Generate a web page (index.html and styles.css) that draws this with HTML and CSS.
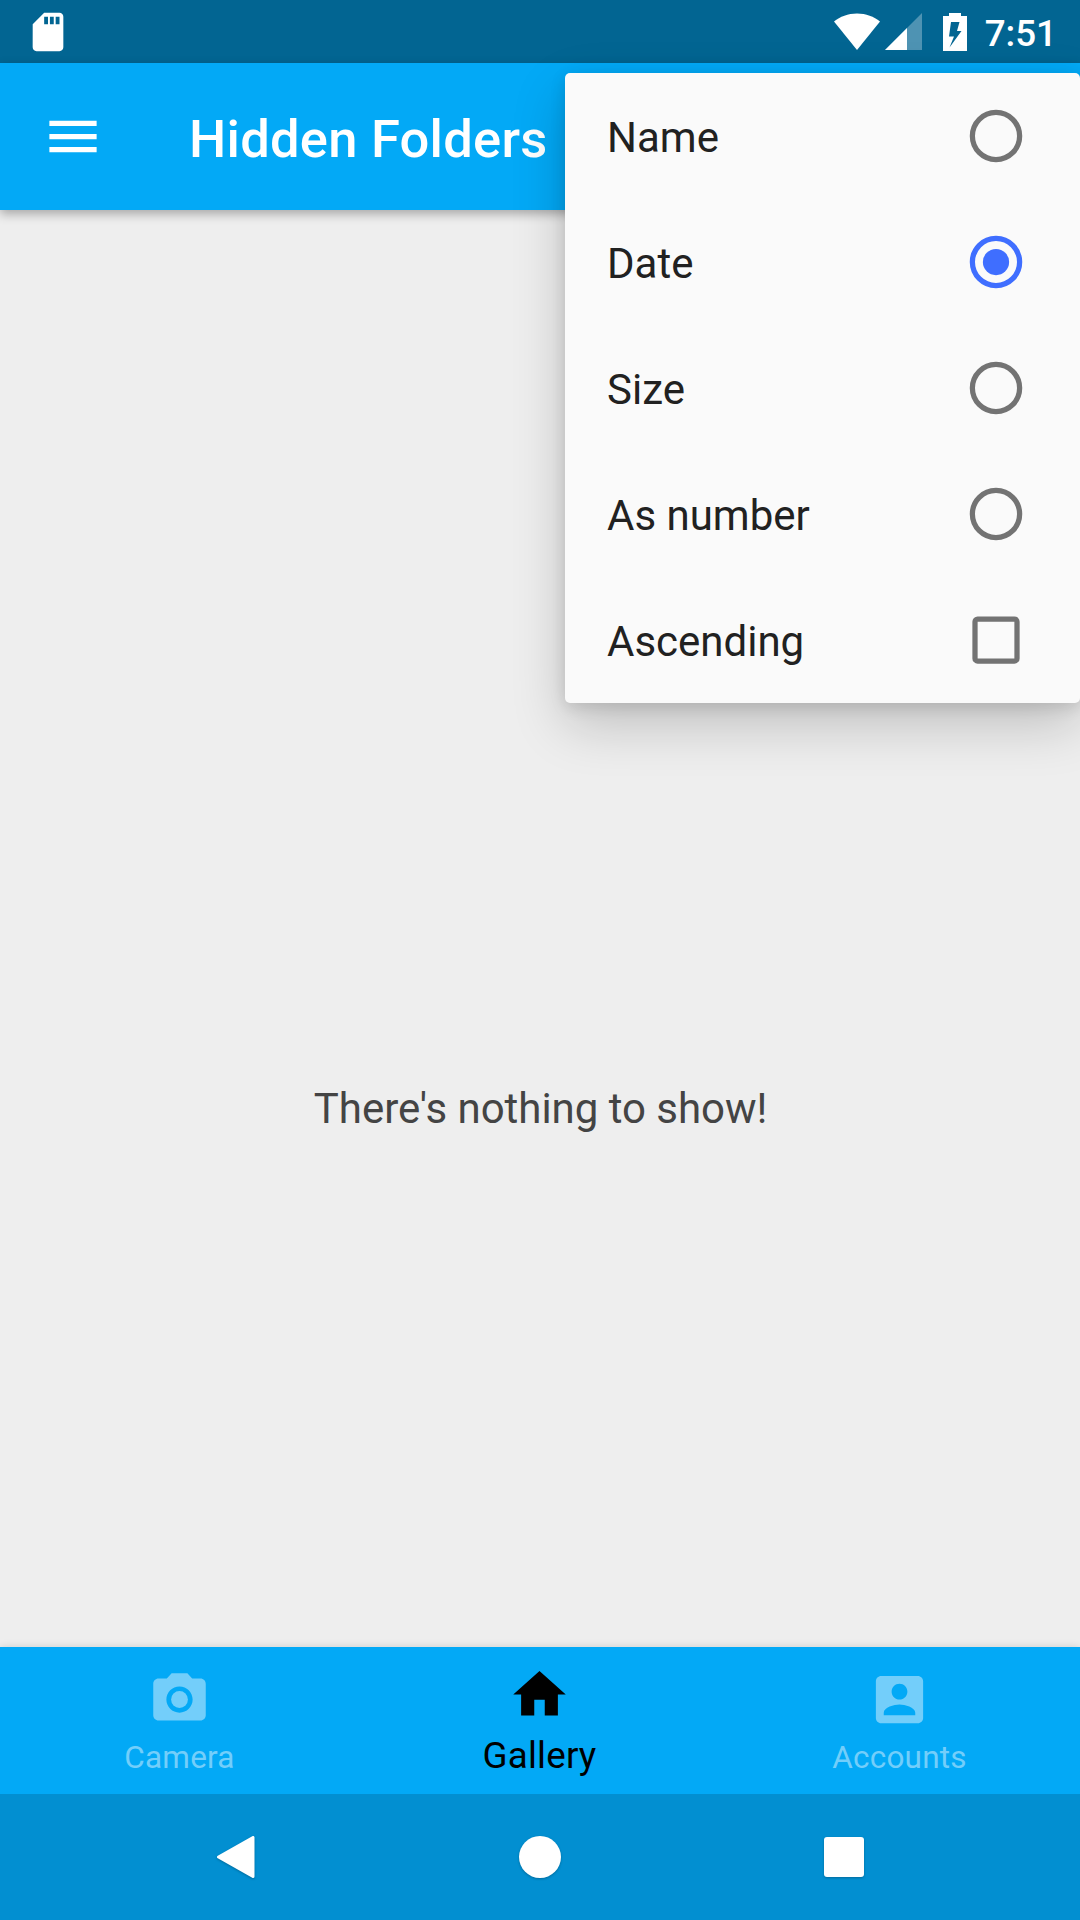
FILE: index.html
```html
<!DOCTYPE html>
<html lang="en">
<head>
<meta charset="utf-8">
<title>Hidden Folders</title>
<link rel="stylesheet" href="styles.css">
</head>
<body>
<div class="screen">
  <div class="status-bar">
    <svg class="sd-icon" viewBox="0 0 24 24"><path d="M18 2h-8L4.02 8 4 20c0 1.1.9 2 2 2h12c1.1 0 2-.9 2-2V4c0-1.1-.9-2-2-2zm-6 6h-2V4h2v4zm3 0h-2V4h2v4zm3 0h-2V4h2v4z"/></svg>
    <div class="status-right">
      <svg class="wifi-icon" viewBox="0 0 46 37"><path d="M23 37 0 8.5C6 3.500 14 .5 23 .5s17 3 23 8z"/></svg>
      <svg class="signal-icon" viewBox="0 0 37 37"><path opacity=".3" d="M0 37 37 0v37z"/><path d="M0 37 22 15v22z"/></svg>
      <svg class="battery-icon" viewBox="0 0 24 38"><path fill-rule="evenodd" d="M6 0h12v3h6v35H0V3h6zM8 9 6 23.500h5L6.500 34.500 18.500 18H14L16.500 9z"/></svg>
      <span class="clock">7:51</span>
    </div>
  </div>
  <header class="app-bar">
    <svg class="menu-icon" viewBox="0 0 24 24"><path d="M3 18h18v-2H3v2zm0-5h18v-2H3v2zm0-7v2h18V6H3z"/></svg>
    <h1 class="title">Hidden Folders</h1>
  </header>
  <main class="content"><p class="empty">There's nothing to show!</p></main>
  <nav class="tabs">
    <div class="tab">
      <svg class="tab-icon" viewBox="0 0 24 24"><circle cx="12" cy="12" r="3.2"/><path d="M9 2 7.170 4H4c-1.100 0-2 .9-2 2v12c0 1.100.9 2 2 2h16c1.100 0 2-.9 2-2V6c0-1.100-.9-2-2-2h-3.170L15 2H9zm3 15c-2.760 0-5-2.240-5-5s2.240-5 5-5 5 2.240 5 5-2.240 5-5 5z"/></svg>
      <span>Camera</span>
    </div>
    <div class="tab active">
      <svg class="tab-icon" viewBox="0 0 24 24"><path d="M10 20v-6h4v6h5v-8h3L12 3 2 12h3v8z"/></svg>
      <span>Gallery</span>
    </div>
    <div class="tab">
      <svg class="tab-icon" viewBox="0 0 24 24"><path d="M3 5v14c0 1.100.89 2 2 2h14c1.100 0 2-.9 2-2V5c0-1.100-.9-2-2-2H5c-1.110 0-2 .9-2 2zm12 4c0 1.660-1.340 3-3 3s-3-1.340-3-3 1.340-3 3-3 3 1.340 3 3zm-9 8c0-2 4-3.100 6-3.100s6 1.100 6 3.100v1H6v-1z"/></svg>
      <span>Accounts</span>
    </div>
  </nav>
  <div class="nav-bar">
    <svg class="nav-icon" viewBox="0 0 44 44"><path d="M39 2.500v39L4.500 22z" stroke="#fff" stroke-width="3" stroke-linejoin="round"/></svg>
    <svg class="nav-icon" viewBox="0 0 44 44"><circle cx="22" cy="22" r="21"/></svg>
    <svg class="nav-icon" viewBox="0 0 44 44"><rect x="2" y="2" width="40" height="40" rx="3"/></svg>
  </div>
  <div class="popup">
    <div class="option"><span>Name</span><svg class="mark" viewBox="0 0 32 32"><circle cx="16" cy="16" r="9"/></svg></div>
    <div class="option"><span>Date</span><svg class="mark checked" viewBox="0 0 32 32"><circle cx="16" cy="16" r="9"/><circle class="dot" cx="16" cy="16" r="5"/></svg></div>
    <div class="option"><span>Size</span><svg class="mark" viewBox="0 0 32 32"><circle cx="16" cy="16" r="9"/></svg></div>
    <div class="option"><span>As number</span><svg class="mark" viewBox="0 0 32 32"><circle cx="16" cy="16" r="9"/></svg></div>
    <div class="option"><span>Ascending</span><svg class="mark" viewBox="0 0 32 32"><rect x="8" y="8" width="16" height="16" rx="1"/></svg></div>
  </div>
</div>
</body>
</html>
```
FILE: styles.css
```css
* { box-sizing: border-box; }
body { margin: 0; font-family: Roboto, sans-serif; }
svg { display: block; fill: #fff; flex: none; }
.screen {
  position: relative;
  display: flex;
  flex-direction: column;
  width: 1080px;
  height: 1920px;
  overflow: hidden;
  background: #eee;
}
.status-bar {
  display: flex;
  justify-content: space-between;
  align-items: center;
  height: 63px;
  padding: 0 23px 0 24.5px;
  background: #026592;
}
.sd-icon { width: 46px; height: 46px; }
.status-right { display: flex; align-items: center; }
.wifi-icon { width: 46px; height: 37px; }
.signal-icon { width: 37px; height: 37px; margin-left: 5px; }
.battery-icon { width: 24px; height: 38px; margin-left: 21px; }
.clock {
  margin-left: 18px;
  color: #fff;
  font-size: 36.75px;
  font-weight: 500;
  line-height: 43px;
  padding-top: 3px;
}
.app-bar {
  position: relative;
  display: flex;
  align-items: center;
  height: 147px;
  padding-left: 41px;
  background: #03a9f6;
  box-shadow: 0 4px 10px rgba(0, 0, 0, .3);
}
.menu-icon { width: 64px; height: 63px; margin-top: -1px; }
.title {
  margin: 4px 0 0 84px;
  color: #fff;
  font-size: 52.5px;
  font-weight: 500;
  line-height: 62px;
  letter-spacing: .25px;
}
.content {
  flex: 1;
  display: flex;
  align-items: center;
  justify-content: center;
}
.empty { margin: 361px 0 0 1px; font-size: 42px; line-height: 50px; letter-spacing: -.04px; color: #444; }
.tabs {
  position: relative;
  display: grid;
  grid-template-columns: repeat(3, 360px);
  height: 147px;
  background: #03a9f6;
  box-shadow: 0 0 8px rgba(0, 0, 0, .14);
}
.tab {
  display: flex;
  flex-direction: column;
  align-items: center;
  padding: 21px 2px 0 0;
  color: #73cefa;
  font-size: 31.5px;
  line-height: 38px;
  letter-spacing: .2px;
}
.tab span { padding-left: 1px; }
.tab-icon { width: 63px; height: 63px; margin-bottom: 8px; fill: currentColor; }
.tab.active { padding-top: 16px; color: #000; font-size: 36.75px; }
.active .tab-icon { margin-bottom: 11px; }
.nav-bar {
  position: relative;
  display: flex;
  align-items: center;
  justify-content: center;
  gap: 260px;
  height: 126px;
  background: #028fd1;
}
.nav-icon { width: 44px; height: 44px; filter: drop-shadow(0 1px 1px rgba(0, 0, 0, .25)); }
.popup {
  position: absolute;
  top: 73px;
  right: 0;
  width: 515px;
  background: #fafafa;
  border-radius: 5px;
  box-shadow: 0 21px 54px rgba(0, 0, 0, .2), 0 4px 16px rgba(0, 0, 0, .12);
}
.option {
  display: flex;
  align-items: center;
  justify-content: space-between;
  height: 126px;
  padding: 0 42px;
  color: #212121;
  font-size: 42px;
  line-height: 50px;
}
.option span { padding-top: 4px; }
.mark { width: 84px; height: 84px; fill: none; stroke: #737373; stroke-width: 2; }
.checked { stroke: #3f6eff; }
.dot { fill: #3f6eff; stroke: none; }
```
